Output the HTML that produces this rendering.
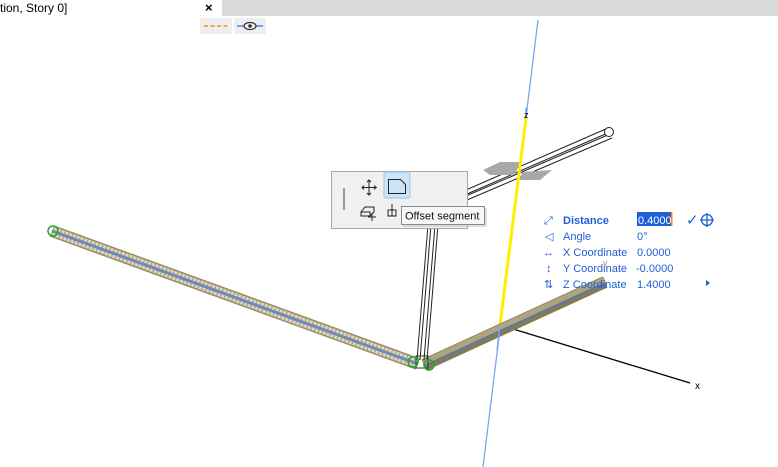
<!DOCTYPE html>
<html><head><meta charset="utf-8"><style>
html,body{margin:0;padding:0;width:778px;height:467px;overflow:hidden;background:#fff;font-family:"Liberation Sans",sans-serif}
svg{display:block}
</style></head><body>
<svg width="778" height="467" viewBox="0 0 778 467" xmlns="http://www.w3.org/2000/svg">
<rect x="222" y="0" width="556" height="16" fill="#d9d9d9"/>
<text x="0" y="12" font-size="12" fill="#000">tion, Story 0]</text>
<text x="205" y="12" font-size="13" font-weight="bold" fill="#000">×</text>
<rect x="200" y="18" width="32" height="16" rx="2" fill="#eeeeee"/>
<line x1="204" y1="26" x2="230" y2="26" stroke="#ff8c1a" stroke-width="1.5" stroke-dasharray="4,2.5"/>
<rect x="234" y="18" width="32" height="16" rx="2" fill="#eeeeee"/>
<line x1="237" y1="26" x2="263" y2="26" stroke="#3b8cff" stroke-width="1.5"/>
<ellipse cx="250" cy="26" rx="6" ry="3.5" fill="#eee" stroke="#333" stroke-width="1.2"/>
<circle cx="250" cy="26" r="1.8" fill="#333"/>

<line x1="538" y1="20" x2="483" y2="467" stroke="#7aa8f0" stroke-width="1.3"/>
<line x1="466" y1="190" x2="608" y2="128" stroke="#222" stroke-width="1"/>
<line x1="467" y1="194" x2="610" y2="132" stroke="#222" stroke-width="1"/>
<line x1="466" y1="196" x2="610" y2="134" stroke="#222" stroke-width="1"/>
<line x1="467" y1="200" x2="612" y2="138" stroke="#222" stroke-width="1"/>
<circle cx="609" cy="132" r="4.5" fill="#fff" stroke="#222"/>
<polygon points="483,170 500,162 520,162 515,175 490,175" fill="#a8a8a8"/>
<polygon points="522,172 552,170 540,180 520,180" fill="#a8a8a8"/>
<line x1="526" y1="118" x2="500" y2="325" stroke="#ffee00" stroke-width="3"/>
<line x1="526" y1="108" x2="526" y2="118" stroke="#3b7fd8" stroke-width="1"/>
<text x="524" y="118" font-size="9" fill="#000">z</text>
<line x1="500" y1="325" x2="690" y2="383" stroke="#000" stroke-width="1.3"/>
<text x="695" y="389" font-size="10" fill="#000">x</text>
<line x1="52" y1="231" x2="418" y2="364" stroke="#968a66" stroke-width="12"/>
<line x1="52" y1="231" x2="418" y2="364" stroke="#e2d9bc" stroke-width="9"/>
<line x1="52" y1="231" x2="418" y2="364" stroke="#b5a985" stroke-width="9" stroke-dasharray="1.5,2.5"/>
<line x1="52" y1="231" x2="418" y2="364" stroke="#7088c0" stroke-width="3"/>
<circle cx="53" cy="231" r="5" fill="none" stroke="#22aa22" stroke-width="1.5"/>
<line x1="424" y1="365" x2="605" y2="282" stroke="#857a55" stroke-width="12"/>
<line x1="424" y1="363" x2="605" y2="280" stroke="#b0a47c" stroke-width="7"/>
<line x1="424" y1="366" x2="605" y2="283" stroke="#5a78a8" stroke-width="2"/>
<line x1="500" y1="325" x2="497" y2="350" stroke="#7aa8f0" stroke-width="1.3"/>
<line x1="428" y1="225" x2="417" y2="360" stroke="#222" stroke-width="1"/>
<line x1="431" y1="225" x2="420" y2="360" stroke="#222" stroke-width="1"/>
<line x1="435" y1="225" x2="424" y2="360" stroke="#222" stroke-width="1"/>
<line x1="438" y1="225" x2="427" y2="360" stroke="#222" stroke-width="1"/>
<rect x="416" y="356" width="12" height="12" fill="none" stroke="#333"/>
<circle cx="413" cy="362" r="5" fill="none" stroke="#22aa22" stroke-width="1.5"/>
<circle cx="429" cy="365" r="5" fill="none" stroke="#22aa22" stroke-width="1.5"/>

<rect x="331.5" y="171.5" width="136" height="57" fill="#f0f0f0" stroke="#a8a8a8"/>
<line x1="344" y1="188" x2="344" y2="210" stroke="#444"/>
<g stroke="#222" stroke-width="1" fill="none">
<path d="M369 180v15M362 187.5h15M367 182l2-2 2 2M367 193l2 2 2-2M364 185.5l-2 2 2 2M374 185.5l2 2-2 2"/>
</g>
<rect x="384" y="172" width="26" height="26" rx="2" fill="#cce4f7" stroke="#99c9ef"/>
<path d="M388.5 179.5h12l5 5v9h-17z" fill="none" stroke="#222"/>
<path d="M361 212l4-5h9v5l-4 4h-9z M361 212h9v4" fill="none" stroke="#222"/>
<path d="M372 213v8M368 217h8" stroke="#222"/>
<path d="M388 210h8v6h-8zM392 204v12" fill="none" stroke="#222"/>
<rect x="403" y="208" width="84" height="19" fill="#c8c8c8" opacity="0.6"/>
<rect x="401.5" y="206.5" width="83" height="18" fill="#f7f7f7" stroke="#8a8a8a"/>
<text x="405" y="219.5" font-size="11" fill="#111">Offset segment</text>

<g font-size="11" fill="#1f5fd8">
<text x="544" y="224">⤢</text>
<text x="563" y="224" font-weight="bold">Distance</text>
<text x="545" y="240">◁</text><text x="563" y="240">Angle</text>
<text x="543" y="256">↔</text><text x="563" y="256">X Coordinate</text>
<text x="546" y="272">↕</text><text x="563" y="272">Y Coordinate</text>
<text x="544" y="288">⇅</text><text x="563" y="288">Z Coordinate</text>
<rect x="637" y="212" width="35" height="14" fill="#1f5fd8"/>
<rect x="671" y="212" width="1.5" height="14" fill="#ff8800"/>
<text x="638" y="224" fill="#fff">0.4000</text>
<text x="637" y="240">0°</text>
<text x="637" y="256">0.0000</text>
<text x="636" y="272">-0.0000</text>
<text x="637" y="288">1.4000</text>
<text x="686" y="225" font-size="15">✓</text>
<circle cx="707" cy="220" r="5.5" fill="none" stroke="#1f5fd8" stroke-width="1.3"/>
<path d="M707 213v14M700 220h14" stroke="#1f5fd8" stroke-width="1.3"/>
<path d="M706 280l4 3-4 3z"/>
</g>
<text x="603" y="266" font-size="9" fill="#999">y</text>
</svg>
</body></html>
